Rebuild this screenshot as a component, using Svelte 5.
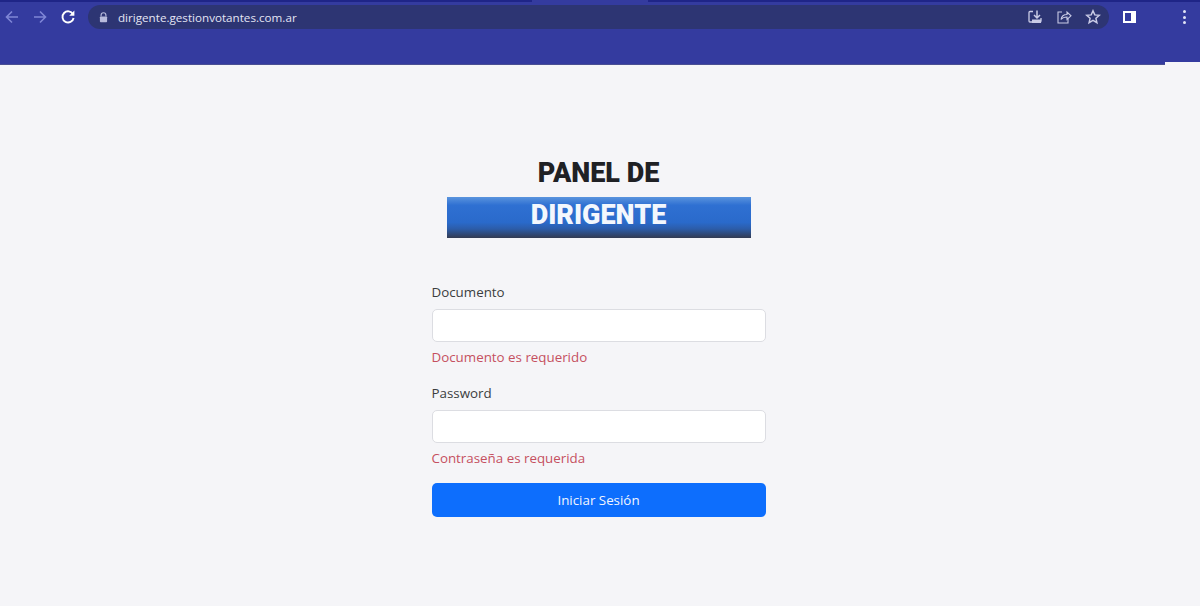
<script>
  const fields = [
    { label: 'Documento', error: 'Documento es requerido', type: 'text' },
    { label: 'Password', error: 'Contraseña es requerida', type: 'password' }
  ];
</script>

<div class="page">
  <header class="chrome">
    <div class="tabline"><span class="tabhi"></span></div>
    <div class="toolbar">
      <svg class="nav first dim" viewBox="0 0 16 16" width="16" height="16"><path d="M14 8H3M8 2.5 2.5 8 8 13.5" fill="none" stroke="currentColor" stroke-width="1.6"/></svg>
      <svg class="nav second dim" viewBox="0 0 16 16" width="16" height="16"><path d="M2 8h11M8 2.5 13.5 8 8 13.5" fill="none" stroke="currentColor" stroke-width="1.6"/></svg>
      <svg class="nav third" viewBox="0 0 16 16" width="16" height="16"><path d="M13 5.2A5.6 5.6 0 1 0 13.6 9" fill="none" stroke="currentColor" stroke-width="1.9"/><path d="M14.4 1.6v5.2H9.2z" fill="currentColor"/></svg>
      <div class="omni">
        <svg class="lock" viewBox="0 0 10 12" width="9" height="11"><path d="M2.3 5V3.4a2.7 2.7 0 0 1 5.4 0V5" fill="none" stroke="currentColor" stroke-width="1.2"/><rect x="1" y="4.8" width="8" height="6.4" rx="1" fill="currentColor"/></svg>
        <span class="url">dirigente.gestionvotantes.com.ar</span>
        <span class="grow"></span>
        <svg class="act" viewBox="0 0 16 16" width="16" height="16"><path d="M6 2.5H3a1 1 0 0 0-1 1v8.500a1 1 0 0 0 1 1h10a1 1 0 0 0 1-1V9" fill="none" stroke="currentColor" stroke-width="1.300"/><path d="M10 1.500v7M7 6l3 3 3-3" fill="none" stroke="currentColor" stroke-width="1.500"/><rect x="5" y="10.500" width="9" height="3.500" fill="currentColor"/></svg>
        <svg class="act" viewBox="0 0 16 16" width="16" height="16"><path d="M6 3H2v11h10v-4" fill="none" stroke="currentColor" stroke-width="1.100"/><path d="M5 10.500c.5-3 2.500-5 6-5V3l4 3.800-4 3.700V8c-2.500 0-4.500.6-6 2.500z" fill="none" stroke="currentColor" stroke-width="1.100"/></svg>
        <svg class="act" viewBox="0 0 16 16" width="16" height="16"><path d="M8 1.800l1.800 4.100 4.500.4-3.400 3 1 4.400L8 11.400l-3.900 2.300 1-4.400-3.400-3 4.500-.4z" fill="none" stroke="currentColor" stroke-width="1.500"/></svg>
      </div>
      <svg class="side" viewBox="0 0 14 14" width="14" height="14"><path fill-rule="evenodd" d="M0 1h13v12H0zM2 3v8h6V3z" fill="currentColor"/></svg>
      <div class="menu"><span class="dot"></span><span class="dot"></span><span class="dot"></span></div>
    </div>
    <span class="notch"></span>
  </header>

  <main class="content">
    <div class="login">
      <h1 class="title">PANEL DE</h1>
      <div class="banner">DIRIGENTE</div>
      <form class="form">
        {#each fields as f}
          <div class="field">
            <label class="label" for={f.label}>{f.label}</label>
            <input class="input" id={f.label} type={f.type} />
            <div class="error">{f.error}</div>
          </div>
        {/each}
        <button class="btn" type="button">Iniciar Sesión</button>
      </form>
    </div>
  </main>
</div>

<style>
  :global(body) {
    margin: 0;
    background: #f5f5f8;
    font-family: "Open Sans", "Noto Sans", sans-serif;
  }
  .page {
    width: 1200px;
    height: 606px;
    overflow: hidden;
    display: flex;
    flex-direction: column;
  }
  .chrome {
    position: relative;
    height: 65px;
    flex: none;
    background: #343b9f;
    box-sizing: border-box;
    border-bottom: 1px solid #4a4f93;
  }
  .tabline {
    height: 2px;
    background: #1f2587;
    display: flex;
    justify-content: center;
  }
  .tabhi {
    width: 116px;
    margin-right: 20px;
    background: #343b9f;
  }
  .toolbar {
    height: 28px;
    margin-top: 1px;
    display: flex;
    align-items: center;
    color: #fff;
    padding: 0 14px 0 4px;
  }
  .nav { flex: none; }
  .dim { color: #7f86d6; }
  .second { margin-left: 12px; }
  .third { margin-left: 12px; color: #fff; }
  .omni {
    margin-left: 12px;
    width: 1021px;
    flex: none;
    height: 24px;
    border-radius: 12px;
    background: #2d3573;
    display: flex;
    align-items: center;
    padding: 0 8px 0 11px;
    box-sizing: border-box;
    color: #c9cbe6;
  }
  .lock { flex: none; color: #b8bbdc; }
  .url {
    margin-left: 10px;
    font-size: 11.650px;
    color: #e4e5f4;
    white-space: nowrap;
  }
  .grow { flex: 1; }
  .act { flex: none; margin-left: 13px; }
  .side { margin-left: 14px; color: #fff; flex: none; }
  .menu {
    margin-left: auto;
    flex: none;
    width: 4px;
    display: flex;
    flex-direction: column;
    align-items: center;
    gap: 2.500px;
  }
  .dot {
    width: 3px;
    height: 3px;
    border-radius: 50%;
    background: #e2e4f6;
  }
  .notch {
    position: absolute;
    right: 0;
    bottom: -1px;
    width: 35px;
    height: 3px;
    background: #f5f5f8;
  }
  .content {
    flex: 1;
    display: flex;
    justify-content: center;
  }
  .login {
    width: 334px;
    margin-left: -3px;
    padding-top: 91px;
    display: flex;
    flex-direction: column;
    align-items: center;
  }
  .title {
    margin: 0;
    height: 32px;
    line-height: 34px;
    font-family: Roboto, "Liberation Sans", sans-serif;
    font-size: 27px;
    font-weight: 900;
    color: #1f2125;
  }
  .banner {
    width: 304px;
    height: 41px;
    margin-top: 9px;
    box-sizing: border-box;
    line-height: 37px;
    text-align: center;
    font-family: Roboto, "Liberation Sans", sans-serif;
    font-size: 27px;
    font-weight: 900;
    color: #f3f7fd;
    background: linear-gradient(#5a94de 0, #2f70d2 20%, #2a6acb 62%, #2c5ca8 78%, #333b52 100%);
  }
  .form {
    width: 100%;
    margin-top: 43px;
    display: flex;
    flex-direction: column;
  }
  .field {
    display: flex;
    flex-direction: column;
    margin-bottom: 13px;
  }
  .label {
    font-size: 13.350px;
    line-height: 23px;
    color: #3b3d40;
    margin-bottom: 5px;
  }
  .input {
    height: 33px;
    box-sizing: border-box;
    border: 1px solid #dcdde2;
    border-radius: 5px;
    background: #fff;
    padding: 0;
    margin: 0;
  }
  .error {
    font-size: 13.350px;
    line-height: 23px;
    margin-top: 4px;
    color: #c5505f;
  }
  .btn {
    height: 34px;
    border: none;
    border-radius: 5px;
    background: #0d6efd;
    color: #f2f6ff;
    font-family: inherit;
    font-size: 13.350px;
    padding: 0;
  }
</style>
